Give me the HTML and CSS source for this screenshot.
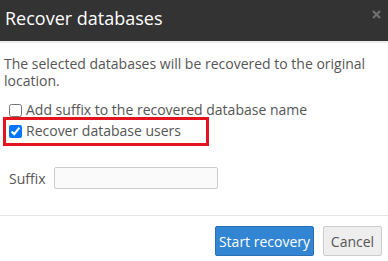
FILE: index.html
```html
<!DOCTYPE html>
<html>
<head>
<meta charset="utf-8">
<link rel="stylesheet" href="styles.css">
</head>
<body>
<div class="dialog">
  <div class="header">
    <h1 class="title">Recover databases</h1>
    <svg class="close" width="9" height="9" viewBox="0 0 9 9" aria-label="Close"><path d="M1 1 L8 8 M8 1 L1 8" stroke="#707070" stroke-width="2.2" stroke-linecap="butt"/></svg>
  </div>
  <div class="body">
    <p class="intro">The selected databases will be recovered to the original location.</p>
    <label class="check"><input type="checkbox"> Add suffix to the recovered database name</label>
    <div class="highlight">
      <label class="check"><input type="checkbox" checked> Recover database users</label>
    </div>
    <div class="field">
      <span class="field-label">Suffix</span>
      <input type="text" class="text-input">
    </div>
  </div>
  <div class="footer">
    <button class="btn btn-primary">Start recovery</button>
    <button class="btn btn-default">Cancel</button>
  </div>
</div>
</body>
</html>
```

FILE: styles.css
```css
html, body {
  margin: 0;
  padding: 0;
  background: #fff;
}
body {
  font-family: "Open Sans", sans-serif;
  font-size: 14px;
  color: #555;
}
.dialog {
  width: 388px;
  height: 261px;
  display: flex;
  flex-direction: column;
}
.header {
  height: 41px;
  background: #333;
  border-bottom: 2px solid #eee;
  display: flex;
  align-items: flex-start;
  justify-content: space-between;
  padding: 6px 7px 0 5px;
  box-sizing: content-box;
  flex-shrink: 0;
}
.header {
  height: 35px;
}
.title {
  margin: 0;
  font-size: 18px;
  font-weight: 400;
  color: #fff;
  line-height: 24px;
}
.close {
  margin-top: 4px;
  display: block;
}
.body {
  padding: 12px 0 0 4px;
  height: 173px;
  box-sizing: border-box;
  border-bottom: 1px solid #e5e5e5;
  flex-shrink: 0;
}
.intro {
  margin: 0 0 11px 0;
  line-height: 17px;
}
.check {
  display: flex;
  align-items: center;
  line-height: 20px;
  height: 20px;
  margin-left: 4px;
}
.check input {
  margin: 0 4px 0 1px;
  width: 13px;
  height: 13px;
}
.highlight {
  width: 206px;
  height: 29px;
  border: 3px solid #e3141f;
  margin: -3px 0 0 -1px;
  box-sizing: border-box;
  padding-top: 1px;
}
.highlight .check {
  margin-left: 2px;
}
.field {
  display: flex;
  align-items: center;
  margin-top: 21px;
  margin-left: 5px;
}
.field-label {
  width: 45px;
}
.text-input {
  width: 164px;
  height: 22px;
  box-sizing: border-box;
  border: 1px solid #ccc;
  border-radius: 2px;
  background: #fafafa;
  margin: 0;
}
.footer {
  display: flex;
  justify-content: flex-end;
  padding: 10px 6px 0 0;
  gap: 9px;
}
.btn {
  font-family: "Open Sans", sans-serif;
  font-size: 14px;
  height: 30px;
  border-radius: 2px;
  padding: 0;
  cursor: pointer;
}
.btn-primary {
  width: 99px;
  background: #3285d3;
  border: 1px solid #2a6fb3;
  color: #fff;
}
.btn-default {
  width: 59px;
  background: #eee;
  border: 1px solid #ccc;
  color: #555;
}
```
